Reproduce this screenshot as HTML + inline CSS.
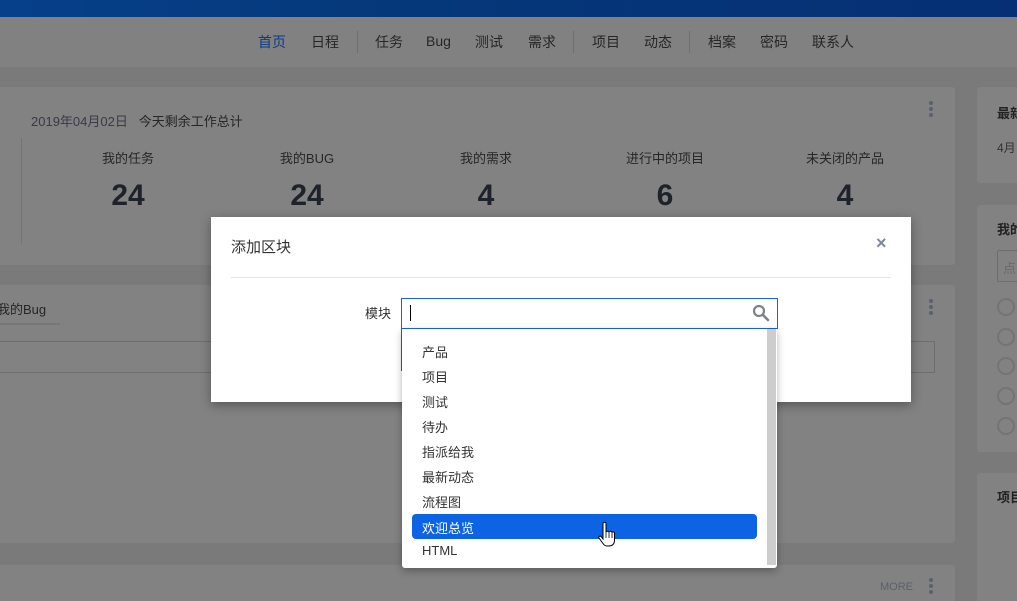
<!DOCTYPE html>
<html><head><meta charset="utf-8"><style>
*{margin:0;padding:0;box-sizing:border-box}
html{width:1017px;height:601px;overflow:hidden}
body{width:1017px;height:601px;overflow:hidden;background:#7a7a7a;font-family:"Liberation Sans","Noto Sans CJK SC",sans-serif;position:relative;font-size:13px;color:#2a2a2a;white-space:nowrap}
.a{position:absolute}
.card{position:absolute;background:#828282;border-radius:3px}
.nav span{position:absolute;top:32px;font-size:14px;color:#262626}
.sep{position:absolute;top:31px;width:1px;height:22px;background:#6f6f6f}
.lbl{position:absolute;top:148px;width:120px;text-align:center;font-size:13px;color:#262626}
.num{position:absolute;top:179px;width:120px;text-align:center;font-size:30px;font-weight:bold;color:#1e222a}
.dots{position:absolute;width:4px}
.dots i{display:block;width:4px;height:4px;border-radius:2px;background:#5a6070;margin-bottom:2px}
.item{position:absolute;left:20px;font-size:13px;color:#333}
.circ{position:absolute;left:997px;width:18px;height:18px;border:2px solid #747474;border-radius:50%}
</style></head><body>
<div class="a" style="left:0;top:0;width:1017px;height:17px;background:linear-gradient(90deg,#06408a,#05387a 40%,#062f75)"></div>
<div class="a" style="left:0;top:17px;width:1017px;height:50px;background:#818181"></div>
<div class="nav">
<span style="left:258px;color:#0a3a8a">首页</span><span style="left:311px">日程</span>
<span style="left:375px">任务</span><span style="left:426px;top:33px">Bug</span><span style="left:475px">测试</span><span style="left:528px">需求</span>
<span style="left:592px">项目</span><span style="left:644px">动态</span>
<span style="left:708px">档案</span><span style="left:760px">密码</span><span style="left:812px">联系人</span>
</div>
<div class="sep" style="left:357px"></div><div class="sep" style="left:573px"></div><div class="sep" style="left:689px"></div>

<div class="card" style="left:-4px;top:87px;width:959px;height:178px"></div>
<div class="a" style="left:31px;top:111px;font-size:13px;color:#3a3a48">2019年04月02日 &nbsp; <span style="color:#262626">今天剩余工作总计</span></div>
<div class="a" style="left:21px;top:138px;width:1px;height:106px;background:#747474"></div>
<div class="lbl" style="left:68px">我的任务</div><div class="num" style="left:68px">24</div>
<div class="lbl" style="left:247px">我的BUG</div><div class="num" style="left:247px">24</div>
<div class="lbl" style="left:426px">我的需求</div><div class="num" style="left:426px">4</div>
<div class="lbl" style="left:605px">进行中的项目</div><div class="num" style="left:605px">6</div>
<div class="lbl" style="left:785px">未关闭的产品</div><div class="num" style="left:785px">4</div>
<div class="dots" style="left:929px;top:101px"><i></i><i></i><i></i></div>

<div class="card" style="left:-4px;top:285px;width:959px;height:258px"></div>
<div class="a" style="left:-3px;top:299px;font-size:13px;color:#262626">我的Bug</div>
<div class="a" style="left:0;top:323px;width:60px;height:2px;background:#777"></div>
<div class="a" style="left:-2px;top:341px;width:937px;height:32px;border:1px solid #6e6e6e"></div>
<div class="dots" style="left:929px;top:299px"><i></i><i></i><i></i></div>

<div class="card" style="left:-4px;top:565px;width:959px;height:50px"></div>
<div class="a" style="left:880px;top:581px;font-size:11px;color:#5a5f6a">MORE</div>
<div class="dots" style="left:929px;top:578px"><i></i><i></i><i></i></div>

<div class="card" style="left:977px;top:87px;width:50px;height:96px"></div>
<div class="a" style="left:997px;top:103px;font-weight:bold;color:#222">最新</div>
<div class="a" style="left:997px;top:139px;font-size:12px;color:#333">4月</div>
<div class="card" style="left:977px;top:205px;width:50px;height:247px"></div>
<div class="a" style="left:997px;top:219px;font-weight:bold;color:#222">我的</div>
<div class="a" style="left:997px;top:250px;width:30px;height:32px;border:1px solid #6e6e6e;border-radius:2px;color:#6a6a6a;padding:7px 0 0 5px">点</div>
<div class="circ" style="top:298px"></div><div class="circ" style="top:328px"></div><div class="circ" style="top:357px"></div><div class="circ" style="top:387px"></div><div class="circ" style="top:417px"></div>
<div class="card" style="left:977px;top:473px;width:50px;height:140px"></div>
<div class="a" style="left:997px;top:487px;font-weight:bold;color:#222">项目</div>

<div class="a" style="left:211px;top:217px;width:700px;height:185px;background:#fff;box-shadow:0 3px 10px rgba(0,0,0,.35)"></div>
<div class="a" style="left:231px;top:236px;font-size:15px;color:#333">添加区块</div>
<div class="a" style="left:876px;top:233px;font-size:18px;font-weight:bold;color:#808898">×</div>
<div class="a" style="left:231px;top:277px;width:660px;height:1px;background:#e5e5e5"></div>
<div class="a" style="left:365px;top:303px;font-size:13px;color:#333">模块</div>
<div class="a" style="left:401px;top:298px;width:377px;height:31px;border:1px solid #1565e0;background:#fff"></div>
<div class="a" style="left:410px;top:305px;width:1px;height:16px;background:#000"></div>
<svg class="a" style="left:752px;top:304px" width="18" height="18" viewBox="0 0 18 18"><circle cx="7" cy="7" r="5" fill="none" stroke="#7d8290" stroke-width="2.2"/><path d="M11 11l5 5" stroke="#7d8290" stroke-width="2.6" stroke-linecap="round"/></svg>
<div class="a" style="left:401px;top:329px;width:2px;height:42px;background:#1565e0"></div>
<div class="a" style="left:402px;top:329px;width:375px;height:239px;background:#fff;border-radius:0 0 3px 3px;box-shadow:0 3px 8px rgba(0,0,0,.3)">
<div class="a" style="left:365px;top:0;width:9px;height:236px;background:#cdcdcd"></div>
<div class="item" style="top:13px">产品</div>
<div class="item" style="top:38px">项目</div>
<div class="item" style="top:63px">测试</div>
<div class="item" style="top:88px">待办</div>
<div class="item" style="top:113px">指派给我</div>
<div class="item" style="top:138px">最新动态</div>
<div class="item" style="top:163px">流程图</div>
<div class="a" style="left:10px;top:185px;width:345px;height:25px;background:#0c63e4;border-radius:4px"></div>
<div class="item" style="top:189px;color:#fff">欢迎总览</div>
<div class="item" style="top:214px">HTML</div>
</div>
<svg class="a" style="left:597px;top:521px" width="20" height="28" viewBox="0 0 20 28"><path d="M6 2c1-1 2.5-1 3 0v9c.5-1 2.5-1 3 0 .5-1 2.5-1 3 .3 .7-.8 2.5-.5 2.5 1V19c0 4-2 6-6 6H10c-2 0-3-1-4-2.5L2 17c-.7-1.2.8-2.5 2-1.5L6 18V2z" fill="#fff" stroke="#000" stroke-width="1"/><path d="M9 11v6M12 11.3v5.7M15 11.6v5.4" stroke="#000" stroke-width=".8"/></svg>
</body></html>
